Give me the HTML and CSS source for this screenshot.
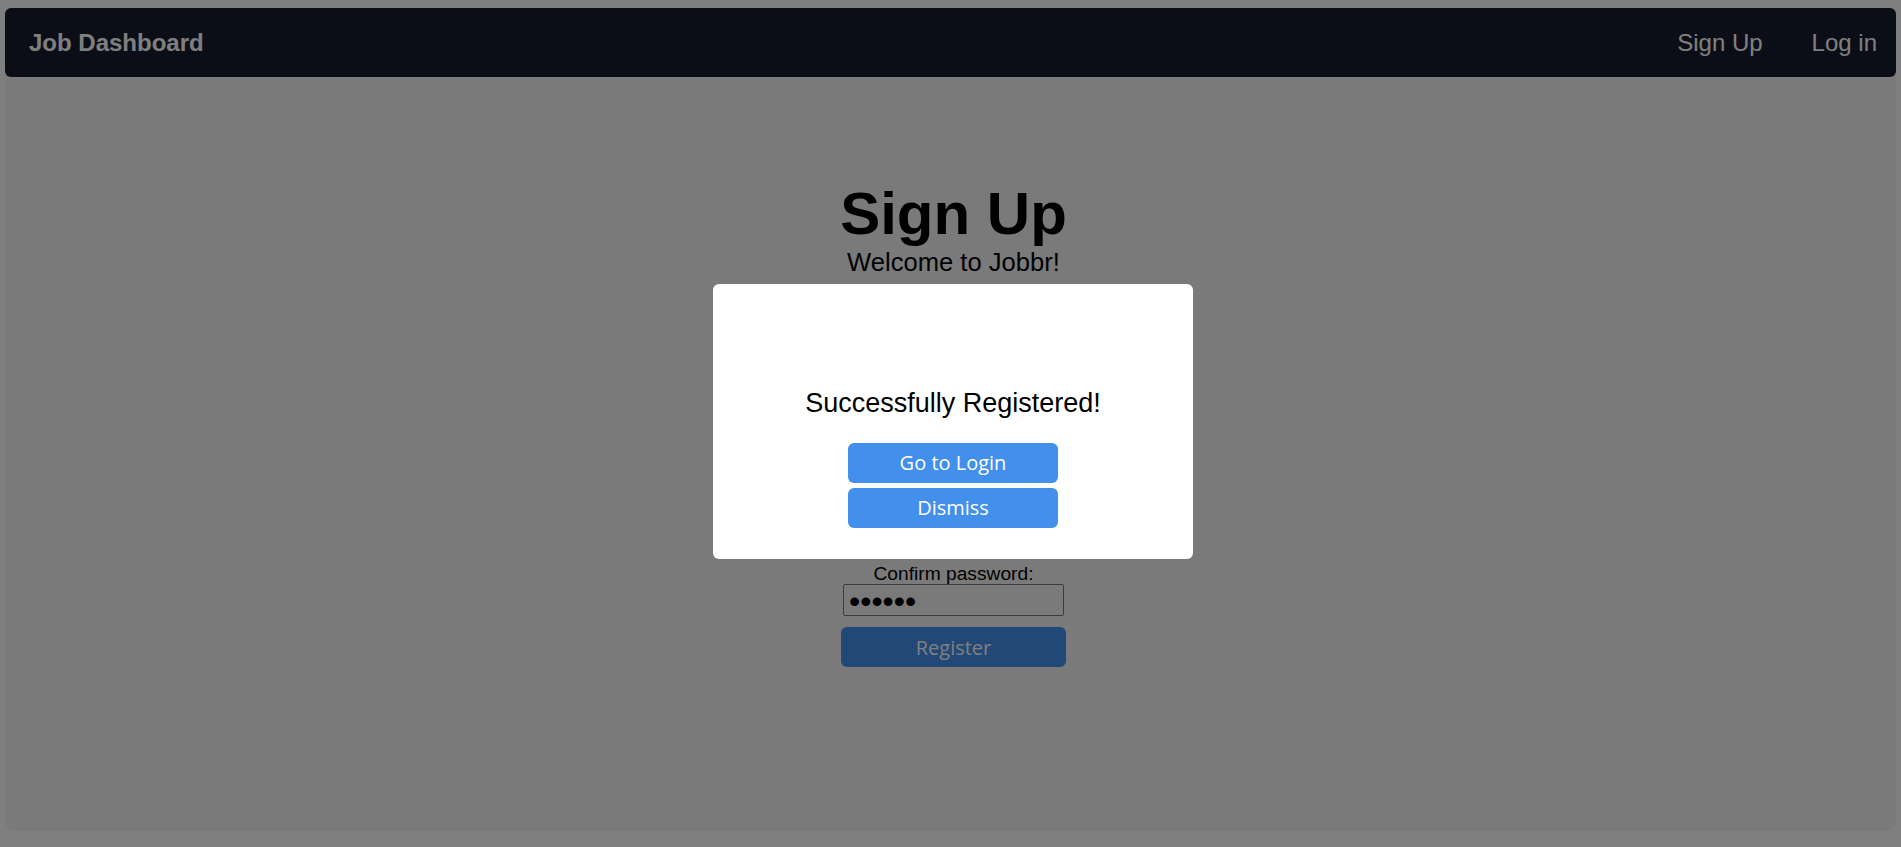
FILE: index.html
```html
<!DOCTYPE html>
<html lang="en">
<head>
<meta charset="utf-8">
<title>Job Dashboard - Sign Up</title>
<link rel="stylesheet" href="styles.css">
</head>
<body>
<div class="page">
  <div class="app">
    <nav class="navbar">
      <a class="brand" href="#">Job Dashboard</a>
      <div class="nav-links">
        <a href="#">Sign Up</a>
        <a href="#">Log in</a>
      </div>
    </nav>
    <main class="signup">
      <h1 class="title">Sign Up</h1>
      <p class="subtitle">Welcome to Jobbr!</p>
      <form class="form">
        <div class="field">
          <label>Confirm password:</label>
          <input type="password" value="123456">
        </div>
        <button type="button" class="btn register">Register</button>
      </form>
    </main>
  </div>
</div>
<div class="overlay"></div>
<div class="modal">
  <p class="modal-text">Successfully Registered!</p>
  <div class="modal-actions">
    <button type="button" class="btn modal-btn">Go to Login</button>
    <button type="button" class="btn modal-btn">Dismiss</button>
  </div>
</div>
</body>
</html>
```
FILE: styles.css
```css
html, body {
  margin: 0;
  padding: 0;
  background: #ffffff;
  font-family: "Liberation Sans", Arial, sans-serif;
  color: #000;
}

.page {
  padding: 8px 5px 16px;
}

.app {
  height: 823px;
  background: #f4f4f4;
  border-radius: 10px;
  display: flex;
  flex-direction: column;
}

.navbar {
  height: 69px;
  background: #181c2e;
  border-radius: 6px;
  display: flex;
  align-items: center;
  justify-content: space-between;
  padding: 0 19px 0 24px;
}

.brand {
  color: #ffffff;
  text-decoration: none;
  font-weight: bold;
  font-size: 24px;
}

.nav-links {
  display: flex;
  gap: 49px;
}

.nav-links a {
  color: #ffffff;
  text-decoration: none;
  font-size: 24px;
}

.signup {
  display: flex;
  flex-direction: column;
  align-items: center;
  padding-top: 102px;
  padding-left: 6px;
}

.title {
  margin: 0;
  font-size: 60px;
  font-weight: bold;
}

.subtitle {
  margin: 0;
  font-size: 25.6px;
}

.form {
  display: flex;
  flex-direction: column;
  align-items: center;
  gap: 11px;
  margin-top: 286px;
}

.field {
  display: flex;
  flex-direction: column;
  align-items: center;
}

.field label {
  font-size: 19.2px;
  line-height: 21px;
}

.field input {
  width: 221px;
  height: 32px;
  box-sizing: border-box;
  border: 1px solid #767676;
  border-radius: 2px;
  padding: 2px 5px 0;
  background: transparent;
  font-family: "Liberation Sans", sans-serif;
  font-size: 32px;
  line-height: 28px;
  color: #000;
}

.btn {
  border: none;
  border-radius: 6px;
  background: #4290ec;
  color: #ffffff;
  font-family: "Open Sans", sans-serif;
  font-size: 20px;
  line-height: 24px;
  cursor: pointer;
}

.register {
  width: 225px;
  height: 40px;
  padding-top: 2px;
}

.overlay {
  position: fixed;
  inset: 0;
  background: rgba(0, 0, 0, 0.5);
}

.modal {
  position: fixed;
  top: 284px;
  left: 713px;
  width: 480px;
  height: 275px;
  box-sizing: border-box;
  background: #ffffff;
  border-radius: 6px;
  padding-top: 104px;
  display: flex;
  flex-direction: column;
  align-items: center;
}

.modal-text {
  margin: 0 0 24px;
  font-size: 27px;
}

.modal-actions {
  display: flex;
  flex-direction: column;
  gap: 5px;
}

.modal-btn {
  width: 210px;
  height: 40px;
}
```
